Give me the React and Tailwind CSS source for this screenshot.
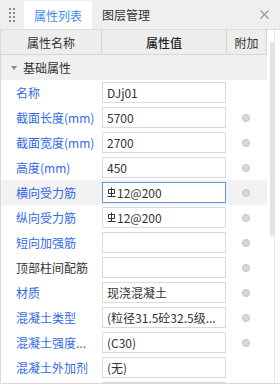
import React from 'react';

const rows = [
  { label: '名称', value: 'DJj01', dot: false },
  { label: '截面长度(mm)', value: '5700', dot: true },
  { label: '截面宽度(mm)', value: '2700', dot: true },
  { label: '高度(mm)', value: '450', dot: true },
  { label: '横向受力筋', value: '12@200', rebar: true, dot: true, active: true },
  { label: '纵向受力筋', value: '12@200', rebar: true, dot: true },
  { label: '短向加强筋', value: '', dot: true },
  { label: '顶部柱间配筋', value: '', dot: true, black: true },
  { label: '材质', value: '现浇混凝土', dot: true },
  { label: '混凝土类型', value: '(粒径31.5砼32.5级...', dot: true },
  { label: '混凝土强度...', value: '(C30)', dot: true },
  { label: '混凝土外加剂', value: '(无)', dot: false },
  { label: '', value: '', dot: false },
];

// 三级钢符号
const Rebar = () => (
  <svg width="9" height="11" viewBox="0 0 9 11" className="mr-px shrink-0" fill="none" stroke="#333" strokeWidth="1">
    <path d="M4.5 0.5 V9.5" />
    <path d="M1.5 2.5 H7.5 V6.5 H1.5 Z" />
    <path d="M0.5 9.5 H8.5" />
  </svg>
);

const Grip = () => (
  <div className="grid grid-cols-2 gap-x-[2px] gap-y-[2px]">
    {Array.from({ length: 8 }).map((_, i) => (
      <div key={i} className="w-[2px] h-[2px] bg-[#8a8a8a]" />
    ))}
  </div>
);

export default function App() {
  return (
    <div
      className="w-[280px] h-[385px] overflow-hidden bg-white text-[12px] leading-[17px] text-[#333]"
      style={{ fontFamily: '"Noto Sans CJK SC", "Noto Sans", sans-serif' }}
    >
      {/* tabs */}
      <div className="flex items-stretch h-[30px] bg-[#efefef] border-b border-[#dcdcdc]">
        <div className="w-[24px] flex items-center justify-center">
          <Grip />
        </div>
        <div className="mt-px px-[10px] bg-white flex items-center text-[#3c8cf0]">属性列表</div>
        <div className="px-[10px] flex items-center text-[#333]">图层管理</div>
        <div className="ml-auto mr-[11px] flex items-center">
          <svg width="9" height="9" viewBox="0 0 9 9" stroke="#9a9a9a" strokeWidth="1.2">
            <path d="M0.5 0.5 L8.5 8.5 M8.5 0.5 L0.5 8.5" />
          </svg>
        </div>
      </div>

      {/* body */}
      <div className="flex h-[354px] border-b border-[#d9d9d9] overflow-hidden">
        <div className="w-[267px] shrink-0 border-l border-[#d9d9d9]">
          <div className="flex h-[25px] bg-[#eeeeee] border-b border-[#d6d6d6]">
            <div className="w-[101px] border-r border-[#d6d6d6] flex items-center justify-center">属性名称</div>
            <div className="w-[125px] border-r border-[#d6d6d6] flex items-center justify-center font-medium text-[#222]">属性值</div>
            <div className="w-[40px] border-r border-[#d6d6d6] flex items-center justify-center">附加</div>
          </div>
          <div className="flex items-center h-[25px] bg-[#f0f0f0] w-[266px]">
            <svg width="6" height="4" viewBox="0 0 6 4" className="ml-[10px] mr-[6px]">
              <path d="M0 0 H6 L3 4 Z" fill="#888" />
            </svg>
            <span>基础属性</span>
          </div>
          {rows.map((r, i) => (
            <div key={i} className={`flex items-center h-[25px] w-[266px] ${r.active ? 'bg-[#f2f2f2]' : ''}`}>
              <div className={`w-[101px] pl-[15px] whitespace-nowrap ${r.black ? 'text-[#333]' : 'text-[#3469e6]'}`}>
                {r.label}
              </div>
              <div className="w-[125px]">
                <div
                  className={`w-[124px] h-[21px] border bg-white flex items-center px-[4px] overflow-hidden ${
                    r.active ? 'border-[#5b97e3]' : 'border-[#dadada]'
                  }`}
                >
                  {r.rebar && <Rebar />}
                  <span className="whitespace-nowrap">{r.value}</span>
                </div>
              </div>
              <div className="w-[40px] flex justify-center pr-[2px]">
                {r.dot && <div className="w-[8px] h-[8px] rounded-full bg-[#d8d8d8] border border-[#c4c4c4]" />}
              </div>
            </div>
          ))}
        </div>
        <div className="flex-1 flex">
          <div className="ml-[3px] w-[5px] border-r border-[#e6e6e6] flex flex-col">
            <div className="mt-[12px] h-[194px] w-[4px] bg-[#e2e2e2] rounded-[2px]" />
          </div>
        </div>
      </div>
    </div>
  );
}
